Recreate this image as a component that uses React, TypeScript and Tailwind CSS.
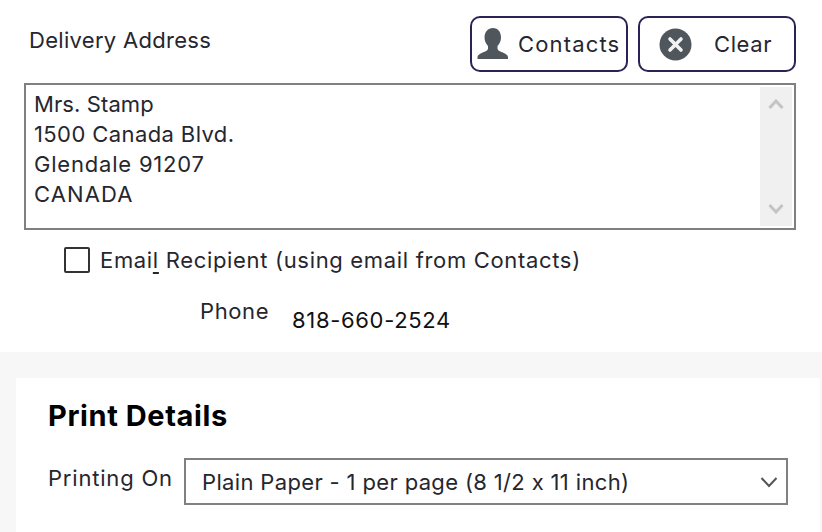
import React from "react";

const font = { fontFamily: '"Inter", "Liberation Sans", sans-serif' };

function PersonIcon() {
  return (
    <svg width="32" height="34" viewBox="0 0 32 34" className="shrink-0">
      <path
        fill="#4f565c"
        d="M16 1c5 0 8 4 8 9.500 0 3.500-1.500 6.500-3.500 8.500v2.500c0 1.500 1.500 2.500 4 3.500 4 1.500 6.500 3 6.500 5.500V32H.5v-1.500c0-2.500 2.500-4 6.500-5.500 2.500-1 4-2 4-3.500V19c-2-2-3.500-5-3.500-8.500C7.500 5 11 1 16 1z"
      />
    </svg>
  );
}

function ClearIcon() {
  return (
    <svg width="33" height="33" viewBox="0 0 33 33" className="shrink-0">
      <circle cx="16.500" cy="16.500" r="16" fill="#4f565c" />
      <path d="M11 11l11 11M22 11L11 22" stroke="#f2f2f2" strokeWidth="3.600" strokeLinecap="round" />
    </svg>
  );
}

export default function App() {
  return (
    <div className="w-[822px] h-[532px] overflow-hidden bg-white flex flex-col text-[#26262e] text-[22px] leading-[30px] [font-feature-settings:'calt'_0]" style={font}>
      <div className="h-[352px] shrink-0 pl-6 pr-[26px] pt-4">
        <div className="flex justify-between h-[56px]">
          <div className="pl-[5px] pt-[9px] tracking-[0.3px]">Delivery Address</div>
          <div className="flex gap-[10px]">
            <button className="w-[158px] h-[56px] border-2 border-[#2c2255] rounded-[10px] flex items-center pl-[5px] gap-[9px]">
              <PersonIcon />
              <span className="tracking-[1.15px]">Contacts</span>
            </button>
            <button className="w-[158px] h-[56px] border-2 border-[#2c2255] rounded-[10px] flex items-center pl-[19px] gap-[22px]">
              <ClearIcon />
              <span className="tracking-[0.6px]">Clear</span>
            </button>
          </div>
        </div>
        <div className="mt-[11px] h-[147px] border-2 border-[#808080] flex justify-between pl-[8px] pr-[2px] pt-[2px] pb-[2px]">
          <div className="pt-[2px]">
            <div className="tracking-[0.1px]">Mrs. Stamp</div>
            <div className="tracking-[0.4px]">1500 Canada Blvd.</div>
            <div className="tracking-[0.8px]">Glendale 91207</div>
            <div className="tracking-[1.1px]">CANADA</div>
          </div>
          <div className="w-[32px] bg-[#f0f0f0] flex flex-col justify-between items-center py-[12px]">
            <svg width="16" height="10" viewBox="0 0 16 10"><path d="M1.500 9L8 2l6.500 7" fill="none" stroke="#c4c4c4" strokeWidth="3" /></svg>
            <svg width="16" height="10" viewBox="0 0 16 10"><path d="M1.500 1L8 8l6.500-7" fill="none" stroke="#c4c4c4" strokeWidth="3" /></svg>
          </div>
        </div>
        <div className="mt-[17px] ml-10 flex items-center h-[26px]">
          <div className="w-[26px] h-[26px] border-2 border-[#333333] rounded-[2px] shrink-0" />
          <div className="ml-[10px] tracking-[0.67px]">Emai<span className="underline underline-offset-[4px]">l</span> Recipient (using email from Contacts)</div>
        </div>
        <div className="flex mt-[23px]">
          <div className="ml-[176px] w-[92px] tracking-[0.6px]">Phone</div>
          <div className="pt-[9px] text-[#111111] tracking-[0.67px]">818-660-2524</div>
        </div>
      </div>
      <div className="flex-1 bg-[#f7f7f7] pt-[26px] pl-4 pr-[2px]">
        <div className="h-full bg-white pl-[32px] pr-[32px]">
          <div className="pt-[21px] text-[29px] leading-[34px] font-bold text-black tracking-[0.6px]">Print Details</div>
          <div className="flex mt-[25px]">
            <div className="w-[136px] pt-[5px] tracking-[0.8px]">Printing On</div>
            <div className="flex-1 h-[47px] border-2 border-[#808080] flex items-center justify-between pl-[16px] pr-[8px]">
              <span className="tracking-[0.35px]">Plain Paper - 1 per page (8 1/2 x 11 inch)</span>
              <svg width="18" height="12" viewBox="0 0 18 12"><path d="M1.500 2L9 10l7.500-8" fill="none" stroke="#555555" strokeWidth="2" /></svg>
            </div>
          </div>
        </div>
      </div>
    </div>
  );
}
